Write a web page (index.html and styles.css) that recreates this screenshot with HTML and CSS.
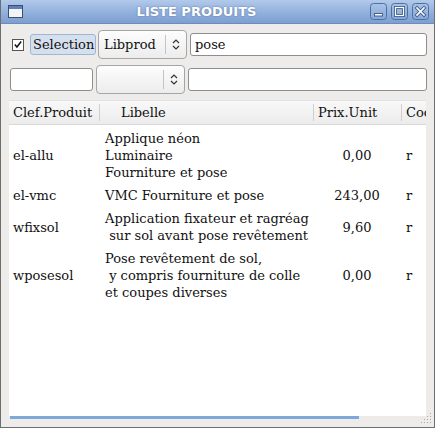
FILE: index.html
```html
<!DOCTYPE html>
<html>
<head>
<meta charset="utf-8">
<link rel="stylesheet" href="styles.css">
</head>
<body>
<div class="window">
  <div class="titlebar">
    <svg class="winicon" width="15" height="13" viewBox="0 0 15 13">
      <rect x="0.5" y="0.5" width="14" height="12" fill="#f4f4f4" stroke="#3e4f6e"/>
      <rect x="1" y="1" width="13" height="3" fill="#5b7fbf"/>
    </svg>
    <div class="title">LISTE PRODUITS</div>
    <div class="tbuttons">
      <svg class="tbtn" width="17" height="17" viewBox="0 0 17 17">
        <rect x="0.5" y="0.5" width="16" height="16" rx="3" fill="url(#g)" stroke="#4f6f9f"/>
        <rect x="4.5" y="10.5" width="8" height="2.5" fill="#fff" stroke="#40608f"/>
      </svg>
      <svg class="tbtn" width="17" height="17" viewBox="0 0 17 17">
        <rect x="0.5" y="0.5" width="16" height="16" rx="3" fill="url(#g)" stroke="#4f6f9f"/>
        <rect x="4.5" y="4.5" width="8" height="8" fill="none" stroke="#40608f" stroke-width="3"/>
        <rect x="4.5" y="4.5" width="8" height="8" fill="none" stroke="#fff" stroke-width="1.2"/>
      </svg>
      <svg class="tbtn" width="17" height="17" viewBox="0 0 17 17">
        <defs>
          <linearGradient id="g" x1="0" y1="0" x2="0" y2="1">
            <stop offset="0" stop-color="#a9c3e6"/>
            <stop offset="1" stop-color="#86a7d6"/>
          </linearGradient>
        </defs>
        <rect x="0.5" y="0.5" width="16" height="16" rx="3" fill="url(#g)" stroke="#4f6f9f"/>
        <path d="M5 5 L12 12 M12 5 L5 12" stroke="#40608f" stroke-width="3.4" stroke-linecap="square"/>
        <path d="M5 5 L12 12 M12 5 L5 12" stroke="#fff" stroke-width="1.6" stroke-linecap="square"/>
      </svg>
    </div>
  </div>
  <div class="content">
    <div class="row row1">
      <span class="check">
        <svg width="11" height="11" viewBox="0 0 11 11"><path d="M2 5.5 L4.3 8.3 L9 2.2" fill="none" stroke="#111" stroke-width="1.6"/></svg>
      </span>
      <span class="btn-sel">Selection</span>
      <div class="combo combo1">
        <span class="combo-text">Libprod</span>
        <span class="combo-sep"></span>
        <svg class="arrows" width="8" height="11" viewBox="0 0 8 11"><path d="M1 4 L4 1 L7 4 M1 7 L4 10 L7 7" fill="none" stroke="#333" stroke-width="1.2"/></svg>
      </div>
      <div class="input input-pose">pose</div>
    </div>
    <div class="row row2">
      <div class="input input-small"></div>
      <div class="combo combo2">
        <span class="combo-text"></span>
        <span class="combo-sep"></span>
        <svg class="arrows" width="8" height="11" viewBox="0 0 8 11"><path d="M1 4 L4 1 L7 4 M1 7 L4 10 L7 7" fill="none" stroke="#333" stroke-width="1.2"/></svg>
      </div>
      <div class="input input-wide"></div>
    </div>
    <div class="table">
      <div class="thead">
        <div class="th c1">Clef.Produit</div>
        <div class="th c2">Libelle</div>
        <div class="th c3">Prix.Unit</div>
        <div class="th c4">Coo</div>
      </div>
      <div class="tbody">
        <div class="tr">
          <div class="td c1">el-allu</div>
          <div class="td c2">Applique néon
Luminaire
Fourniture et pose</div>
          <div class="td c3">0,00</div>
          <div class="td c4">r</div>
        </div>
        <div class="tr">
          <div class="td c1">el-vmc</div>
          <div class="td c2">VMC Fourniture et pose</div>
          <div class="td c3">243,00</div>
          <div class="td c4">r</div>
        </div>
        <div class="tr">
          <div class="td c1">wfixsol</div>
          <div class="td c2">Application fixateur et ragréag
 sur sol avant pose revêtement</div>
          <div class="td c3">9,60</div>
          <div class="td c4">r</div>
        </div>
        <div class="tr">
          <div class="td c1">wposesol</div>
          <div class="td c2">Pose revêtement de sol,
 y compris fourniture de colle
et coupes diverses</div>
          <div class="td c3">0,00</div>
          <div class="td c4">r</div>
        </div>
      </div>
      <div class="hscroll"><div class="hthumb"></div></div>
    </div>
    <svg class="grip" width="12" height="12" viewBox="0 0 12 12">
      <g fill="#a8a8a8">
        <rect x="10" y="1" width="1" height="1"/>
        <rect x="7" y="4" width="1" height="1"/><rect x="10" y="4" width="1" height="1"/>
        <rect x="4" y="7" width="1" height="1"/><rect x="7" y="7" width="1" height="1"/><rect x="10" y="7" width="1" height="1"/>
        <rect x="1" y="10" width="1" height="1"/><rect x="4" y="10" width="1" height="1"/><rect x="7" y="10" width="1" height="1"/><rect x="10" y="10" width="1" height="1"/>
      </g>
    </svg>
  </div>
</div>
</body>
</html>
```

FILE: styles.css
```css
html, body {
  margin: 0;
  padding: 0;
  width: 435px;
  height: 428px;
  overflow: hidden;
  background: #6a3a3a;
}

.window {
  box-sizing: border-box;
  width: 435px;
  height: 428px;
  border: 1px solid #6e6e6e;
  border-top: none;
  background: #edeceb;
  display: flex;
  flex-direction: column;
  font-family: "DejaVu Serif", serif;
  font-size: 13px;
  color: #111;
}

.titlebar {
  height: 24px;
  flex: none;
  display: flex;
  align-items: center;
  background: linear-gradient(#b2c9ea, #8eaedb 60%, #7e9fd0);
  border-bottom: 1px solid #6f8cb8;
  box-sizing: border-box;
  padding: 0 5px 0 7px;
}

.winicon {
  display: block;
  flex: none;
}

.title {
  flex: 1;
  text-align: center;
  font-family: "DejaVu Sans", sans-serif;
  font-weight: bold;
  font-size: 13px;
  color: #fff;
  text-shadow: 0 0 2px #5670a0;
}

.tbuttons {
  display: flex;
  gap: 4px;
  flex: none;
}

.tbtn {
  display: block;
}

.content {
  flex: 1;
  position: relative;
  display: flex;
  flex-direction: column;
  padding: 6px 7px 8px 7px;
}

.row {
  display: flex;
  align-items: center;
}

.row1 {
  height: 29px;
}

.row2 {
  height: 29px;
  margin-top: 6px;
}

.check {
  box-sizing: border-box;
  width: 12px;
  height: 12px;
  border: 1px solid #555;
  background: #fff;
  margin-left: 4px;
  display: flex;
  align-items: center;
  justify-content: center;
}

.check svg { display: block; }

.btn-sel {
  box-sizing: border-box;
  margin-left: 6px;
  height: 21px;
  width: 66px;
  padding-left: 2px;
  border: 1px solid #9fb5d6;
  border-radius: 3px;
  background: #d5e0ef;
  display: flex;
  align-items: center;
  white-space: nowrap;
  overflow: hidden;
}

.combo {
  box-sizing: border-box;
  height: 29px;
  border: 1px solid #a6a6a6;
  border-radius: 4px;
  background: linear-gradient(#fdfdfd, #ececec);
  display: flex;
  align-items: center;
}

.combo1 {
  width: 89px;
  margin-left: 2px;
}

.combo2 {
  width: 89px;
  margin-left: 3px;
}

.combo-text {
  width: 66px;
  padding-left: 5px;
  box-sizing: border-box;
}

.combo-sep {
  width: 1px;
  height: 19px;
  background: #c4c4c4;
}

.arrows {
  display: block;
  margin-left: 6px;
}

.input {
  box-sizing: border-box;
  height: 23px;
  border: 1px solid #8e8e8e;
  border-radius: 3px;
  background: #fff;
  display: flex;
  align-items: center;
}

.input-pose {
  flex: 1;
  margin-left: 3px;
  padding-left: 4px;
}

.input-small {
  width: 83px;
  margin-left: 2px;
}

.input-wide {
  flex: 1;
  margin-left: 3px;
}

.table {
  margin-top: 6px;
  margin-right: 1px;
  flex: 1;
  background: #fff;
  display: flex;
  flex-direction: column;
  overflow: hidden;
  margin-left: 1px;
}

.thead {
  height: 25px;
  flex: none;
  display: flex;
  background: linear-gradient(#f8f8f8, #ececec);
  border-top: 1px solid #e2e2e2;
  border-bottom: 1px solid #d8d8d8;
  box-sizing: border-box;
}

.th {
  display: flex;
  align-items: center;
  white-space: nowrap;
  overflow: hidden;
  box-sizing: border-box;
}

.th + .th {
  border-left: 1px solid #cfcfcf;
  margin-top: 3px;
  margin-bottom: 3px;
}

.c1 { width: 90px; padding-left: 4px; flex: none; box-sizing: border-box; }
.c2 { width: 214px; padding-left: 6px; flex: none; box-sizing: border-box; }
.c3 { width: 88px; flex: none; box-sizing: border-box; }
.c4 { flex: 1; padding-left: 5px; box-sizing: border-box; overflow: hidden; }

.th.c2 { padding-left: 21px; }
.th.c3 { padding-left: 4px; }
.th.c4 { padding-left: 4px; }

.tbody {
  flex: 1;
  padding-top: 2px;
}

.tr {
  display: flex;
  align-items: center;
  padding: 3px 0;
  line-height: 17px;
}

.td {
  white-space: pre;
}

.td.c3 {
  text-align: center;
}

.hscroll {
  height: 3px;
  flex: none;
  background: #ecebea;
}

.hthumb {
  width: 349px;
  height: 3px;
  margin-left: 1px;
  background: #80a7da;
}

.grip {
  position: absolute;
  right: 2px;
  bottom: 3px;
  display: block;
}
```
